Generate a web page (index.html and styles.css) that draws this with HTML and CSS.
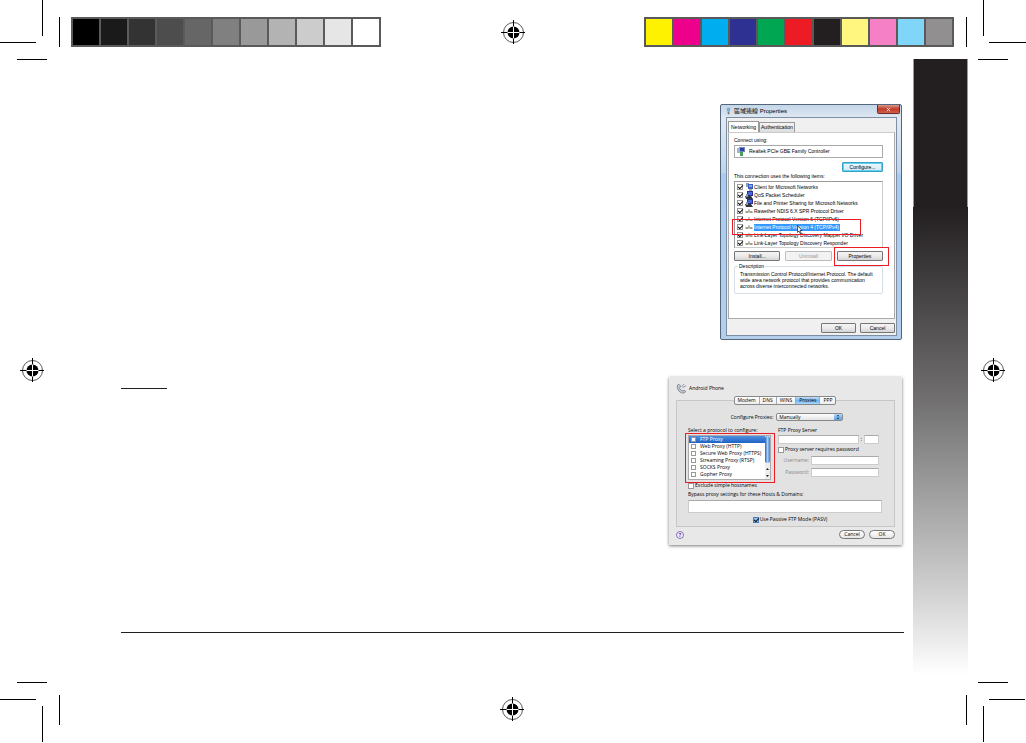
FILE: index.html
```
<!DOCTYPE html>
<html lang="en">
<head>
    <meta charset="UTF-8">
    <meta name="viewport" content="width=device-width, initial-scale=1.0">
    <title>Network settings</title>
    <link rel="stylesheet" href="styles.css">
</head>
<body>
    <!-- shared symbols -->
    <svg class="symbols" aria-hidden="true">
        <symbol id="register" viewBox="0 0 24 24">
            <circle cx="12.5" cy="12.5" r="10" fill="none" stroke="#555" stroke-width="1"/>
            <path d="M12.5 0v24M0 12.5h24" stroke="#000" stroke-width="1"/>
            <circle cx="12.5" cy="12.5" r="6" fill="#000"/>
            <path d="M12.5 6.5v12M6.5 12.5h12" stroke="#fff" stroke-width="1"/>
        </symbol>
        <symbol id="client" viewBox="0 0 8 8">
            <path d="M1 0h3v4H1z" fill="#8fa3b8"/>
            <path d="M3 1h5v5H3z" fill="#3a5fc0"/>
            <path d="M4 2h3v2H4z" fill="#7fa6ea"/>
            <path d="M4 7h3" stroke="#556" stroke-width="1"/>
        </symbol>
        <symbol id="service" viewBox="0 0 8 8">
            <path d="M2 0h6v5H2z" fill="#27308a"/>
            <path d="M3 1h4v3H3z" fill="#4968d8"/>
            <path d="M0 5h6l2 3H1z" fill="#30343c"/>
            <path d="M1 3h2v3H1z" fill="#8b95a8"/>
        </symbol>
        <symbol id="protocol" viewBox="0 0 8 8">
            <path d="M0 5h8" stroke="#9a9a9a" stroke-width="1"/>
            <path d="M4 2v3" stroke="#8a8a70" stroke-width="1"/>
            <path d="M1 4h2v2H1zM5 4h2v2H5z" fill="#a0a08c"/>
        </symbol>
    </svg>

    <div class="sheet">
        <svg class="crop" width="60" height="60"><path d="M42.5 0v36M0 42.5h36M59.5 17v30M17 59.5h30"/></svg>

        <header class="bars">
            <div class="bar">
                <i class="k100"></i><i class="k90"></i><i class="k80"></i><i class="k70"></i><i class="k60"></i><i class="k50"></i><i class="k40"></i><i class="k30"></i><i class="k20"></i><i class="k10"></i><i class="k0"></i>
            </div>
            <svg class="register"><use href="#register"/></svg>
            <div class="bar">
                <i class="yellow"></i><i class="magenta"></i><i class="cyan"></i><i class="blue"></i><i class="green"></i><i class="red"></i><i class="black"></i><i class="light-yellow"></i><i class="light-magenta"></i><i class="light-cyan"></i><i class="gray"></i>
            </div>
        </header>

        <svg class="crop" width="58" height="60"><path d="M15.5 0v36M21 42.5h37M-1.5 17v30M10 59.5h30"/></svg>

        <div class="side side-left"><svg class="register"><use href="#register"/></svg></div>

        <main class="page">
            <div class="content">
                <section class="win">
                    <header class="win-title">
                        <svg class="win-icon" viewBox="0 0 6 8"><path d="M1 0h4v3L4 5H2L1 3z" fill="#7fa9d0"/><path d="M2 5h2v3H2z" fill="#777"/></svg>
                        <h2>區域連線 Properties</h2>
                        <button class="win-close" aria-label="Close"><svg viewBox="0 0 6 6"><path d="M1 1l4 4M5 1l-4 4" stroke="#fff" stroke-width="1"/></svg></button>
                    </header>
                    <div class="win-body">
                        <nav class="tabs">
                            <button class="tab active">Networking</button>
                            <button class="tab">Authentication</button>
                        </nav>
                        <div class="panel">
                            <p>Connect using:</p>
                            <div class="adapter">
                                <svg viewBox="0 0 9 9"><path d="M2 0h6v5H2z" fill="#7087b8"/><path d="M3 1h4v3H3z" fill="#2743b0"/><path d="M0 1h3v5H0z" fill="#a4b4c8"/><path d="M3 5h3v4H3z" fill="#49a05a"/></svg>
                                <span>Realtek PCIe GBE Family Controller</span>
                            </div>
                            <button class="btn configure">Configure...</button>
                            <p>This connection uses the following items:</p>
                            <div class="items">
                                <label><input type="checkbox" checked><svg><use href="#client"/></svg><span>Client for Microsoft Networks</span></label>
                                <label><input type="checkbox" checked><svg><use href="#service"/></svg><span>QoS Packet Scheduler</span></label>
                                <label><input type="checkbox" checked><svg><use href="#service"/></svg><span>File and Printer Sharing for Microsoft Networks</span></label>
                                <label><input type="checkbox" checked><svg><use href="#protocol"/></svg><span>Rawether NDIS 6.X SPR Protocol Driver</span></label>
                                <label><input type="checkbox" checked><svg><use href="#protocol"/></svg><span>Internet Protocol Version 6 (TCP/IPv6)</span></label>
                                <label class="selected"><input type="checkbox" checked><svg><use href="#protocol"/></svg><span>Internet Protocol Version 4 (TCP/IPv4)</span></label>
                                <label><input type="checkbox" checked><svg><use href="#protocol"/></svg><span>Link-Layer Topology Discovery Mapper I/O Driver</span></label>
                                <label><input type="checkbox" checked><svg><use href="#protocol"/></svg><span>Link-Layer Topology Discovery Responder</span></label>
                                <div class="mark mark-item"></div>
                                <svg class="cursor" viewBox="0 0 6 9"><path d="M.5.5v7L2 6l1 2.500 1-.5L3 5.500h2z" fill="#fff" stroke="#123" stroke-width=".7"/></svg>
                            </div>
                            <div class="actions">
                                <button class="btn">Install...</button>
                                <button class="btn" disabled>Uninstall</button>
                                <div class="marked"><button class="btn">Properties</button><div class="mark mark-button"></div></div>
                            </div>
                            <fieldset class="description">
                                <legend>Description</legend>
                                Transmission Control Protocol/Internet Protocol. The default<br>
                                wide area network protocol that provides communication<br>
                                across diverse interconnected networks.
                            </fieldset>
                        </div>
                        <footer class="win-footer">
                            <button class="btn">OK</button>
                            <button class="btn">Cancel</button>
                        </footer>
                    </div>
                </section>

                <div class="row">
                    <hr class="short-rule">
                    <section class="mac">
                        <header class="mac-title">
                            <svg viewBox="0 0 12 12"><path d="M2 2c-2 3 1 9 6 9l2-1c1-1 0-2-1-2l-2 .5C5 8 4 6 4 5l1-1c0-2-2-3-3-2z" fill="#c3c9d2" stroke="#68727f" stroke-width=".8"/><path d="M6 4l3-3M7 5l4-2" stroke="#87919d" stroke-width="1"/></svg>
                            <h2>Android Phone</h2>
                        </header>
                        <div class="group">
                            <nav class="segments">
                                <button>Modem</button><button>DNS</button><button>WINS</button><button class="active">Proxies</button><button>PPP</button>
                            </nav>
                            <div class="configure-row">
                                <label for="mode">Configure Proxies:</label>
                                <span class="select-wrap">
                                    <select id="mode"><option>Manually</option></select>
                                    <svg viewBox="0 0 8 8"><path d="M2 3l2-2 2 2zM2 5l2 2 2-2z" fill="#17375f"/></svg>
                                </span>
                            </div>
                            <div class="columns">
                                <div class="protocols">
                                    <p>Select a protocol to configure:</p>
                                    <div class="listbox">
                                        <div class="options">
                                            <label class="selected"><input type="checkbox">FTP Proxy</label>
                                            <label><input type="checkbox">Web Proxy (HTTP)</label>
                                            <label><input type="checkbox">Secure Web Proxy (HTTPS)</label>
                                            <label><input type="checkbox">Streaming Proxy (RTSP)</label>
                                            <label><input type="checkbox">SOCKS Proxy</label>
                                            <label><input type="checkbox">Gopher Proxy</label>
                                        </div>
                                        <div class="scrollbar">
                                            <div class="thumb"></div>
                                            <svg viewBox="0 0 5 13"><path d="M1 4l1.5-2L4 4zM1 9l1.5 2L4 9z" fill="#222"/></svg>
                                        </div>
                                        <div class="mark mark-list"></div>
                                    </div>
                                    <label class="check"><input type="checkbox">Exclude simple hostnames</label>
                                </div>
                                <div class="server">
                                    <label for="server">FTP Proxy Server</label>
                                    <div class="server-row">
                                        <input id="server" type="text"><span>:</span><input class="port" type="text" aria-label="Port">
                                    </div>
                                    <label class="check"><input type="checkbox">Proxy server requires password</label>
                                    <div class="field"><label for="user">Username:</label><input id="user" type="text"></div>
                                    <div class="field"><label for="pass">Password:</label><input id="pass" type="password"></div>
                                </div>
                            </div>
                            <label class="bypass-label" for="bypass">Bypass proxy settings for these Hosts &amp; Domains:</label>
                            <textarea id="bypass"></textarea>
                            <label class="check passive"><input type="checkbox" checked>Use Passive FTP Mode (PASV)</label>
                        </div>
                        <footer class="mac-footer">
                            <button class="help">?</button>
                            <button class="pill">Cancel</button>
                            <button class="pill">OK</button>
                        </footer>
                    </section>
                </div>

                <hr class="rule">
            </div>
            <div class="band"></div>
        </main>

        <div class="side"><svg class="register"><use href="#register"/></svg></div>

        <svg class="crop" width="60" height="62"><path d="M17 1.5h30M0 18.5h36M59.5 14v30M42.5 25v36"/></svg>
        <footer class="foot"><svg class="register"><use href="#register"/></svg></footer>
        <svg class="crop" width="58" height="62"><path d="M10 1.5h30M21 18.5h36M-1.5 14v30M15.5 25v36"/></svg>
    </div>
</body>
</html>
```
FILE: styles.css
```
* {
    margin: 0;
    padding: 0;
    box-sizing: border-box;
}

body {
    background: #fff;
    color: #000;
    font-family: "Liberation Sans", "Noto Sans CJK TC", sans-serif;
    font-size: 5px;
    line-height: 7px;
}

button, input, select, textarea {
    appearance: none;
    font: inherit;
    color: inherit;
    border-radius: 0;
}

h2 {
    font-size: 6px;
    font-weight: normal;
}

.symbols {
    position: absolute;
    width: 0;
    height: 0;
}

/* printer's sheet */
.sheet {
    display: grid;
    grid-template-columns: 60px 1fr 58px;
    grid-template-rows: 59px 1fr 62px;
    min-height: 100vh;
}

.crop {
    display: block;
    overflow: visible;
    fill: none;
    stroke: #000;
    stroke-width: 1;
}

.register {
    display: block;
    width: 24px;
    height: 24px;
}

.bars {
    display: flex;
    justify-content: space-between;
    align-items: center;
    padding: 17px 14px 12px 11px;
}

.bar {
    display: flex;
    gap: 2px;
    padding: 2px;
    background: #5a5a5a;
}

.bar i {
    width: 26px;
    height: 26px;
}

.k100 { background: #000; }
.k90 { background: #1a1a1a; }
.k80 { background: #333; }
.k70 { background: #4d4d4d; }
.k60 { background: #666; }
.k50 { background: #808080; }
.k40 { background: #999; }
.k30 { background: #b3b3b3; }
.k20 { background: #ccc; }
.k10 { background: #e6e6e6; }
.k0 { background: #fff; }
.yellow { background: #fff200; }
.magenta { background: #ec008c; }
.cyan { background: #00aeef; }
.blue { background: #2e3192; }
.green { background: #00a651; }
.red { background: #ed1c24; }
.black { background: #231f20; }
.light-yellow { background: #fff67f; }
.light-magenta { background: #f580c5; }
.light-cyan { background: #80d6f8; }
.gray { background: #918f90; }

.side {
    display: flex;
    align-items: center;
    padding-left: 13px;
}

.side-left {
    padding-left: 20px;
}

.foot {
    display: flex;
    justify-content: center;
    padding: 16px 4px 0 0;
}

.page {
    display: flex;
}

.content {
    flex: 1;
    display: flex;
    flex-direction: column;
    padding: 45px 9px 48px 61px;
}

.band {
    width: 55px;
    background: linear-gradient(#231f20 148px, #6f6d6e 54%, #d5d5d5 87%, #fff 99%);
}

.band::before {
    content: "";
    display: block;
    height: 148px;
    border: solid #999;
    border-width: 0 1px;
}

.rule, .short-rule {
    border: 0;
    height: 1px;
    background: #231f20;
}

.rule {
    margin-top: auto;
}

.short-rule {
    width: 46px;
    margin-top: 11px;
}

.row {
    display: flex;
    justify-content: space-between;
    margin: 37px 2px 0 0;
}

.mark {
    position: absolute;
    border: 1px solid #ed1c24;
    pointer-events: none;
}

/* Windows dialog */
.win {
    align-self: flex-end;
    width: 182px;
    margin-right: 2px;
    padding: 0 4px 3px 5px;
    border: 1px solid #53667a;
    border-radius: 2px;
    background: linear-gradient(#c4d6e8, #e1eaf3 14px, #bfd5ec 68px, #a9cbf2 69px, #b4cfec);
}

.win-title {
    display: flex;
    align-items: flex-start;
    height: 12px;
}

.win-title h2 {
    flex: 1;
    padding: 3px 0 0 3px;
}

.win-icon {
    width: 5px;
    height: 8px;
    margin-top: 2px;
}

.win-close {
    display: flex;
    align-items: center;
    justify-content: center;
    width: 23px;
    height: 9px;
    margin-right: -3px;
    border: 1px solid #6d2a25;
    border-top: 0;
    border-radius: 0 0 2px 2px;
    background: linear-gradient(#dc9a8e, #c23b28 50%, #d0604a);
}

.win-close svg {
    width: 5px;
    height: 5px;
}

.win-body {
    border: 1px solid #7c8ea2;
    background: #f0f0f0;
    padding: 3px 1px 1px;
}

.tabs {
    display: flex;
    align-items: flex-end;
}

.tab {
    height: 10px;
    padding: 0 1px;
    border: 1px solid #999;
    border-bottom: 0;
    background: linear-gradient(#f4f4f4, #dcdcdc);
}

.tab.active {
    height: 11px;
    padding: 0 2px;
    background: #fff;
}

.panel {
    border: 1px solid #aaa;
    border-top-color: #ccc;
    background: #fff;
    padding: 4px 11px 24px 5px;
}

.adapter {
    display: flex;
    align-items: center;
    gap: 3px;
    height: 13px;
    margin-top: 1px;
    padding-left: 2px;
    border: 1px solid #aaa;
}

.adapter svg {
    width: 9px;
    height: 9px;
}

.btn {
    height: 10px;
    border: 1px solid #777;
    border-radius: 1px;
    background: linear-gradient(#f4f4f4, #ebebeb 50%, #d4d4d4);
}

.btn:disabled {
    border-color: #bbb;
    background: #f2f2f2;
    color: #999;
}

.configure {
    display: block;
    width: 41px;
    margin: 4px 0 1px auto;
    border-color: #3a9fc4;
    background: linear-gradient(#eef8fc, #cfe9f5);
    box-shadow: inset 0 0 0 1px #5fd2f2;
}

.items {
    position: relative;
    margin-top: 1px;
    padding: 1px 0 0 2px;
    border: 1px solid #999;
    border-right-color: #ccc;
    border-bottom-color: #ccc;
}

.items label {
    display: flex;
    align-items: center;
    gap: 1px;
    height: 8px;
}

.items label svg {
    width: 8px;
    height: 8px;
    margin-left: 1px;
}

.items span {
    padding-right: 1px;
}

.items .selected span {
    background: #3399ff;
    color: #fff;
}

input[type="checkbox"] {
    flex: none;
    width: 6px;
    height: 6px;
    border: 1px solid #999;
    background: #fff;
}

input[type="checkbox"]:checked::before {
    content: "";
    display: block;
    width: 4px;
    height: 2px;
    border: solid #111;
    border-width: 0 0 1px 1px;
    transform: rotate(-45deg);
}

.mark-item {
    left: -3px;
    top: 37px;
    width: 129px;
    height: 16px;
}

.cursor {
    position: absolute;
    left: 62px;
    top: 43px;
    width: 6px;
    height: 9px;
}

.actions {
    display: grid;
    grid-template-columns: repeat(3, 1fr);
    gap: 5px;
    margin-top: 3px;
}

.marked {
    position: relative;
    display: grid;
}

.mark-button {
    left: -3px;
    right: -6px;
    top: -4px;
    bottom: -5px;
}

.description {
    margin-top: 2px;
    padding: 1px 5px 4px;
    border: 1px solid #d5dfe5;
    border-radius: 2px;
    line-height: 6px;
}

.description legend {
    margin-left: -2px;
    padding: 0 1px;
    line-height: 7px;
}

.win-footer {
    display: flex;
    justify-content: flex-end;
    gap: 4px;
    padding: 4px 0 1px;
}

.win-footer .btn {
    width: 35px;
}

/* Mac network panel */
.mac {
    width: 233px;
    padding: 6px 7px;
    background: #e8e8e8;
    box-shadow: 0 1px 3px #777;
    font-family: "Open Sans", sans-serif;
}

.mac-title {
    display: flex;
    align-items: center;
    gap: 2px;
}

.mac-title h2 {
    font-size: 5px;
}

.mac-title svg {
    width: 11px;
    height: 11px;
}

.group {
    display: flex;
    flex-direction: column;
    margin-top: 6px;
    padding: 0 12px 3px 11px;
    border: 1px solid #c6c6c6;
    background: #e2e2e2;
}

.segments {
    display: flex;
    align-self: center;
    height: 9px;
    margin-top: -5px;
    border: 1px solid #888;
    border-radius: 2px;
    background: linear-gradient(#fff, #eee);
}

.segments button {
    padding: 0 3px;
    border: 0;
    border-right: 1px solid #aaa;
    background: none;
}

.segments button:last-child {
    border-right: 0;
}

.segments .active {
    background: linear-gradient(#c5e0fa, #6fb5f2 50%, #a9daff);
}

.configure-row {
    display: flex;
    justify-content: center;
    align-items: center;
    gap: 3px;
    margin-top: 8px;
    padding-left: 4px;
}

.select-wrap {
    display: flex;
    width: 67px;
    height: 8px;
    border: 1px solid #888;
    border-radius: 2px;
    background: linear-gradient(#fff, #e4e4e4);
    overflow: hidden;
}

.select-wrap select {
    flex: 1;
    border: 0;
    padding-left: 2px;
    background: none;
    line-height: 6px;
}

.select-wrap svg {
    width: 8px;
    background: linear-gradient(#b5d7f8, #5a9fe4);
}

.columns {
    display: grid;
    grid-template-columns: 83px 1fr;
    gap: 7px;
    margin-top: 6px;
}

.listbox {
    position: relative;
    display: flex;
    height: 45px;
    margin-top: 1px;
    border: 1px solid #aaa;
    background: #fff;
}

.options {
    flex: 1;
}

.options label {
    display: flex;
    align-items: center;
    gap: 4px;
    height: 7px;
    padding-left: 2px;
}

.options .selected {
    background: linear-gradient(#4f8fe0, #1c62c4);
    color: #fff;
}

.options input[type="checkbox"] {
    width: 5px;
    height: 5px;
}

.scrollbar {
    display: flex;
    flex-direction: column;
    justify-content: space-between;
    width: 5px;
    background: #eee;
}

.thumb {
    height: 27px;
    border-radius: 3px;
    background: linear-gradient(90deg, #2c62b8, #a4d0fa 50%, #3c7bd0);
}

.scrollbar svg {
    width: 5px;
    height: 13px;
}

.mark-list {
    inset: -3px -5px -4px -4px;
}

.check {
    display: flex;
    align-items: center;
    gap: 1px;
}

.protocols .check {
    margin-top: 2px;
}

.server-row, .field {
    display: flex;
    align-items: center;
    gap: 2px;
    padding-right: 3px;
}

.server-row {
    margin: 1px 0 2px;
}

.server-row input, .field input, textarea {
    min-width: 0;
    border: 1px solid #ccc;
    border-top-color: #aaa;
    background: #fff;
}

.server-row input {
    flex: 1;
    height: 9px;
}

.server-row .port {
    flex: none;
    width: 15px;
}

.field {
    margin-top: 3px;
    color: #888;
}

.field label {
    width: 31px;
    text-align: right;
}

.field input {
    flex: 1;
    height: 9px;
}

.bypass-label {
    margin-top: 2px;
}

textarea {
    height: 13px;
    margin-top: 2px;
    resize: none;
}

.passive {
    align-self: center;
    margin: 3px 0 0 10px;
}

.passive input[type="checkbox"] {
    border-color: #4a7fbb;
    background: #8fc0f5;
}

.mac-footer {
    display: flex;
    align-items: center;
    gap: 4px;
    margin-top: 3px;
}

.help {
    width: 8px;
    height: 8px;
    margin-right: auto;
    border: 1px solid #8a6cb0;
    border-radius: 50%;
    background: #f6f0ff;
    color: #54278f;
    font-weight: bold;
    line-height: 6px;
}

.pill {
    width: 26px;
    height: 9px;
    border: 1px solid #777;
    border-radius: 5px;
    background: linear-gradient(#fff, #e6e6e6);
}
```
